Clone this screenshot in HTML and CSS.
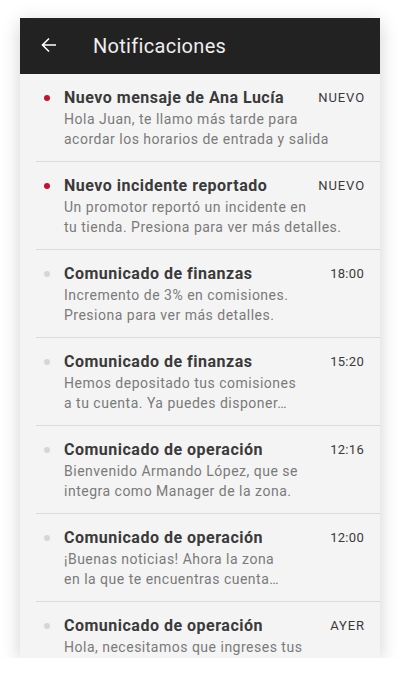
FILE: index.html
```html
<!DOCTYPE html>
<html lang="es">
<head>
<meta charset="utf-8">
<title>Notificaciones</title>
<link rel="stylesheet" href="styles.css">
</head>
<body>
<div class="phone">
  <header class="topbar">
    <svg class="back" width="16" height="16" viewBox="0 0 16 16" aria-hidden="true">
      <path d="M15 8H1.5M8 1.5L1.5 8L8 14.5" fill="none" stroke="#fff" stroke-width="1.6"/>
    </svg>
    <h1 class="title">Notificaciones</h1>
  </header>
  <ul class="list">
    <li class="item">
      <span class="dot dot-new"></span>
      <div class="content">
        <div class="head"><span class="name">Nuevo mensaje de Ana Lucía</span><span class="meta meta-caps">NUEVO</span></div>
        <p class="body">Hola Juan, te llamo más tarde para<br>acordar los horarios de entrada y salida</p>
      </div>
    </li>
    <li class="item">
      <span class="dot dot-new"></span>
      <div class="content">
        <div class="head"><span class="name">Nuevo incidente reportado</span><span class="meta meta-caps">NUEVO</span></div>
        <p class="body">Un promotor reportó un incidente en<br>tu tienda. Presiona para ver más detalles.</p>
      </div>
    </li>
    <li class="item">
      <span class="dot"></span>
      <div class="content">
        <div class="head"><span class="name">Comunicado de finanzas</span><span class="meta">18:00</span></div>
        <p class="body">Incremento de 3% en comisiones.<br>Presiona para ver más detalles.</p>
      </div>
    </li>
    <li class="item">
      <span class="dot"></span>
      <div class="content">
        <div class="head"><span class="name">Comunicado de finanzas</span><span class="meta">15:20</span></div>
        <p class="body">Hemos depositado tus comisiones<br>a tu cuenta. Ya puedes disponer…</p>
      </div>
    </li>
    <li class="item">
      <span class="dot"></span>
      <div class="content">
        <div class="head"><span class="name">Comunicado de operación</span><span class="meta">12:16</span></div>
        <p class="body">Bienvenido Armando López, que se<br>integra como Manager de la zona.</p>
      </div>
    </li>
    <li class="item">
      <span class="dot"></span>
      <div class="content">
        <div class="head"><span class="name">Comunicado de operación</span><span class="meta">12:00</span></div>
        <p class="body">¡Buenas noticias! Ahora la zona<br>en la que te encuentras cuenta…</p>
      </div>
    </li>
    <li class="item">
      <span class="dot"></span>
      <div class="content">
        <div class="head"><span class="name">Comunicado de operación</span><span class="meta meta-caps">AYER</span></div>
        <p class="body">Hola, necesitamos que ingreses tus</p>
      </div>
    </li>
  </ul>
</div>
</body>
</html>
```
FILE: styles.css
```css
html, body {
  margin: 0;
  padding: 0;
  background: #ffffff;
}
body {
  font-family: Roboto, "Noto Sans", sans-serif;
  padding: 18px 20px 0;
}
.phone {
  width: 360px;
  height: 640px;
  background: #f4f4f4;
  overflow: hidden;
  box-shadow: 0 4px 18px rgba(0, 0, 0, 0.18);
}
.topbar {
  height: 56px;
  background: #222222;
  display: flex;
  align-items: center;
  padding-left: 21px;
  box-sizing: border-box;
}
.back {
  display: block;
  margin-top: -2px;
}
.title {
  margin: 0 0 0 36px;
  font-size: 20px;
  font-weight: 400;
  color: #eeeeee;
  letter-spacing: 0.3px;
  line-height: 24px;
}
.list {
  list-style: none;
  margin: 0;
  padding: 0;
}
.item {
  margin-left: 16px;
  padding: 13px 16px 12px 8px;
  border-bottom: 1px solid #dcdcdc;
  display: flex;
  align-items: flex-start;
}
.dot {
  flex: none;
  width: 6px;
  height: 6px;
  border-radius: 50%;
  background: #d6d6d6;
  margin-top: 8px;
  margin-right: 14px;
}
.dot-new {
  background: #c8102e;
}
.content {
  flex: 1;
  min-width: 0;
}
.head {
  display: flex;
  justify-content: space-between;
  align-items: center;
  height: 22px;
  line-height: 22px;
}
.name {
  font-size: 16px;
  font-weight: 700;
  color: #3a3a3a;
  white-space: nowrap;
  letter-spacing: 0.5px;
}
.meta {
  font-size: 13px;
  color: #3a3a3a;
  white-space: nowrap;
  letter-spacing: 0.3px;
}
.meta-caps {
  letter-spacing: 0.9px;
  margin-right: -1px;
}
.body {
  margin: 0;
  font-size: 14px;
  line-height: 20px;
  color: #7a7a7a;
  white-space: nowrap;
  letter-spacing: 0.5px;
}
```
